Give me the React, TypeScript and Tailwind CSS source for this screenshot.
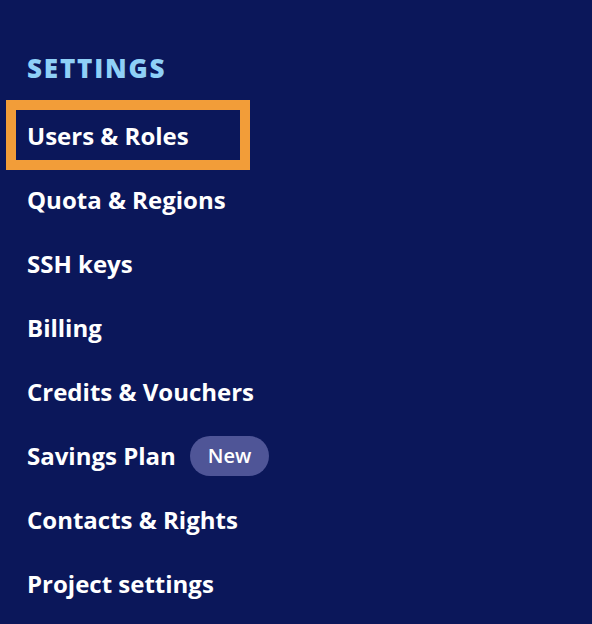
const items = [
  "Users & Roles",
  "Quota & Regions",
  "SSH keys",
  "Billing",
  "Credits & Vouchers",
  "Savings Plan",
  "Contacts & Rights",
  "Project settings",
];

export default function App() {
  return (
    <div
      className="w-[592px] h-[624px] bg-[#0b175a] overflow-hidden pt-[48px]"
      style={{ fontFamily: '"Open Sans", "Noto Sans", sans-serif' }}
    >
      <div className="pl-[27px] h-[40px] flex items-center text-[26px] font-extrabold text-[#8fd0f7] tracking-[1.8px]">
        SETTINGS
      </div>
      <ul className="mt-[16px]">
        {items.map((label, i) => (
          <li key={label} className="relative h-[64px] flex items-center pl-[27px] text-[24px] font-bold text-white">
            {i === 0 && (
              <span className="absolute left-[6px] top-[-4px] w-[244px] h-[70px] border-[10px] border-[#f29d39]" />
            )}
            <span className="relative">{label}</span>
            {label === "Savings Plan" && (
              <span className="ml-[14px] h-[40px] px-[18px] rounded-full bg-[#4f5597] flex items-center text-[20px] font-semibold text-white">
                New
              </span>
            )}
          </li>
        ))}
      </ul>
    </div>
  );
}
